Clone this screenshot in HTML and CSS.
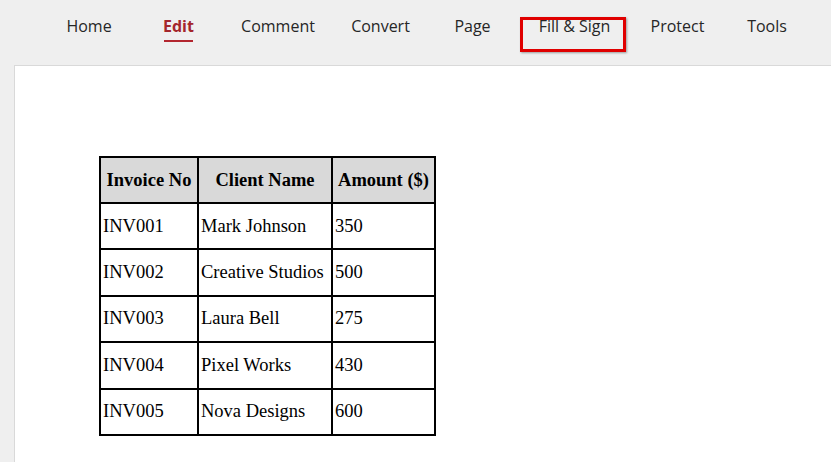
FILE: index.html
```html
<!DOCTYPE html>
<html>
<head>
<meta charset="utf-8">
<link rel="stylesheet" href="styles.css">
</head>
<body>
<nav class="tabs">
  <span class="tab"><span class="label">Home</span></span>
  <span class="tab active"><span class="label">Edit</span></span>
  <span class="tab"><span class="label">Comment</span></span>
  <span class="tab"><span class="label">Convert</span></span>
  <span class="tab"><span class="label">Page</span></span>
  <span class="tab"><span class="label marked">Fill &amp; Sign<span class="mark"></span></span></span>
  <span class="tab"><span class="label">Protect</span></span>
  <span class="tab"><span class="label">Tools</span></span>
</nav>
<main class="page">
  <table class="invoices">
    <thead>
      <tr><th class="c1">Invoice No</th><th class="c2">Client Name</th><th class="c3">Amount ($)</th></tr>
    </thead>
    <tbody>
      <tr><td>INV001</td><td>Mark Johnson</td><td>350</td></tr>
      <tr><td>INV002</td><td>Creative Studios</td><td>500</td></tr>
      <tr><td>INV003</td><td>Laura Bell</td><td>275</td></tr>
      <tr><td>INV004</td><td>Pixel Works</td><td>430</td></tr>
      <tr><td>INV005</td><td>Nova Designs</td><td>600</td></tr>
    </tbody>
  </table>
</main>
</body>
</html>
```
FILE: styles.css
```css
html, body {
  margin: 0;
  padding: 0;
  height: 100%;
}
body {
  background: #efefef;
  display: flex;
  flex-direction: column;
  overflow: hidden;
}
.tabs {
  height: 65px;
  box-sizing: border-box;
  padding: 15px 0 0 49px;
  display: grid;
  grid-template-columns: 80px 99px 100px 105px 79px 125px 81px 98px;
  justify-items: center;
  align-items: start;
  font-family: "Open Sans", "Noto Sans", sans-serif;
  font-size: 16px;
  color: #262626;
  flex: none;
}
.label {
  position: relative;
  display: block;
  line-height: 22px;
  height: 22px;
  white-space: nowrap;
}
.active .label {
  color: #a4262c;
  font-weight: 700;
}
.active .label::after {
  content: "";
  position: absolute;
  left: 1px;
  right: 1px;
  top: 25px;
  height: 2px;
  background: #b3262f;
}
.mark {
  position: absolute;
  left: 50%;
  margin-left: -54.5px;
  top: 2px;
  width: 106px;
  height: 35px;
  box-sizing: border-box;
  border: 3px solid #e00000;
  box-shadow: 1px 1px 2px rgba(0,0,0,0.35);
}
.page {
  flex: 1;
  margin-left: 14px;
  background: #fff;
  border-top: 1px solid #d9d9d9;
  border-left: 1px solid #d9d9d9;
  padding: 90px 0 0 84px;
}
.invoices {
  border-collapse: collapse;
  font-family: "Liberation Serif", "Times New Roman", serif;
  font-size: 18.5px;
  color: #000;
}
.invoices th, .invoices td {
  border: 2px solid #000;
  padding: 0 2px;
  height: 44.4px;
  text-align: left;
  font-weight: normal;
}
.invoices th {
  background: #d9d9d9;
  font-weight: 700;
  text-align: center;
  height: 44px;
}
.c1 { width: 92px; }
.c2 { width: 128px; }
.c3 { width: 97px; }
```
